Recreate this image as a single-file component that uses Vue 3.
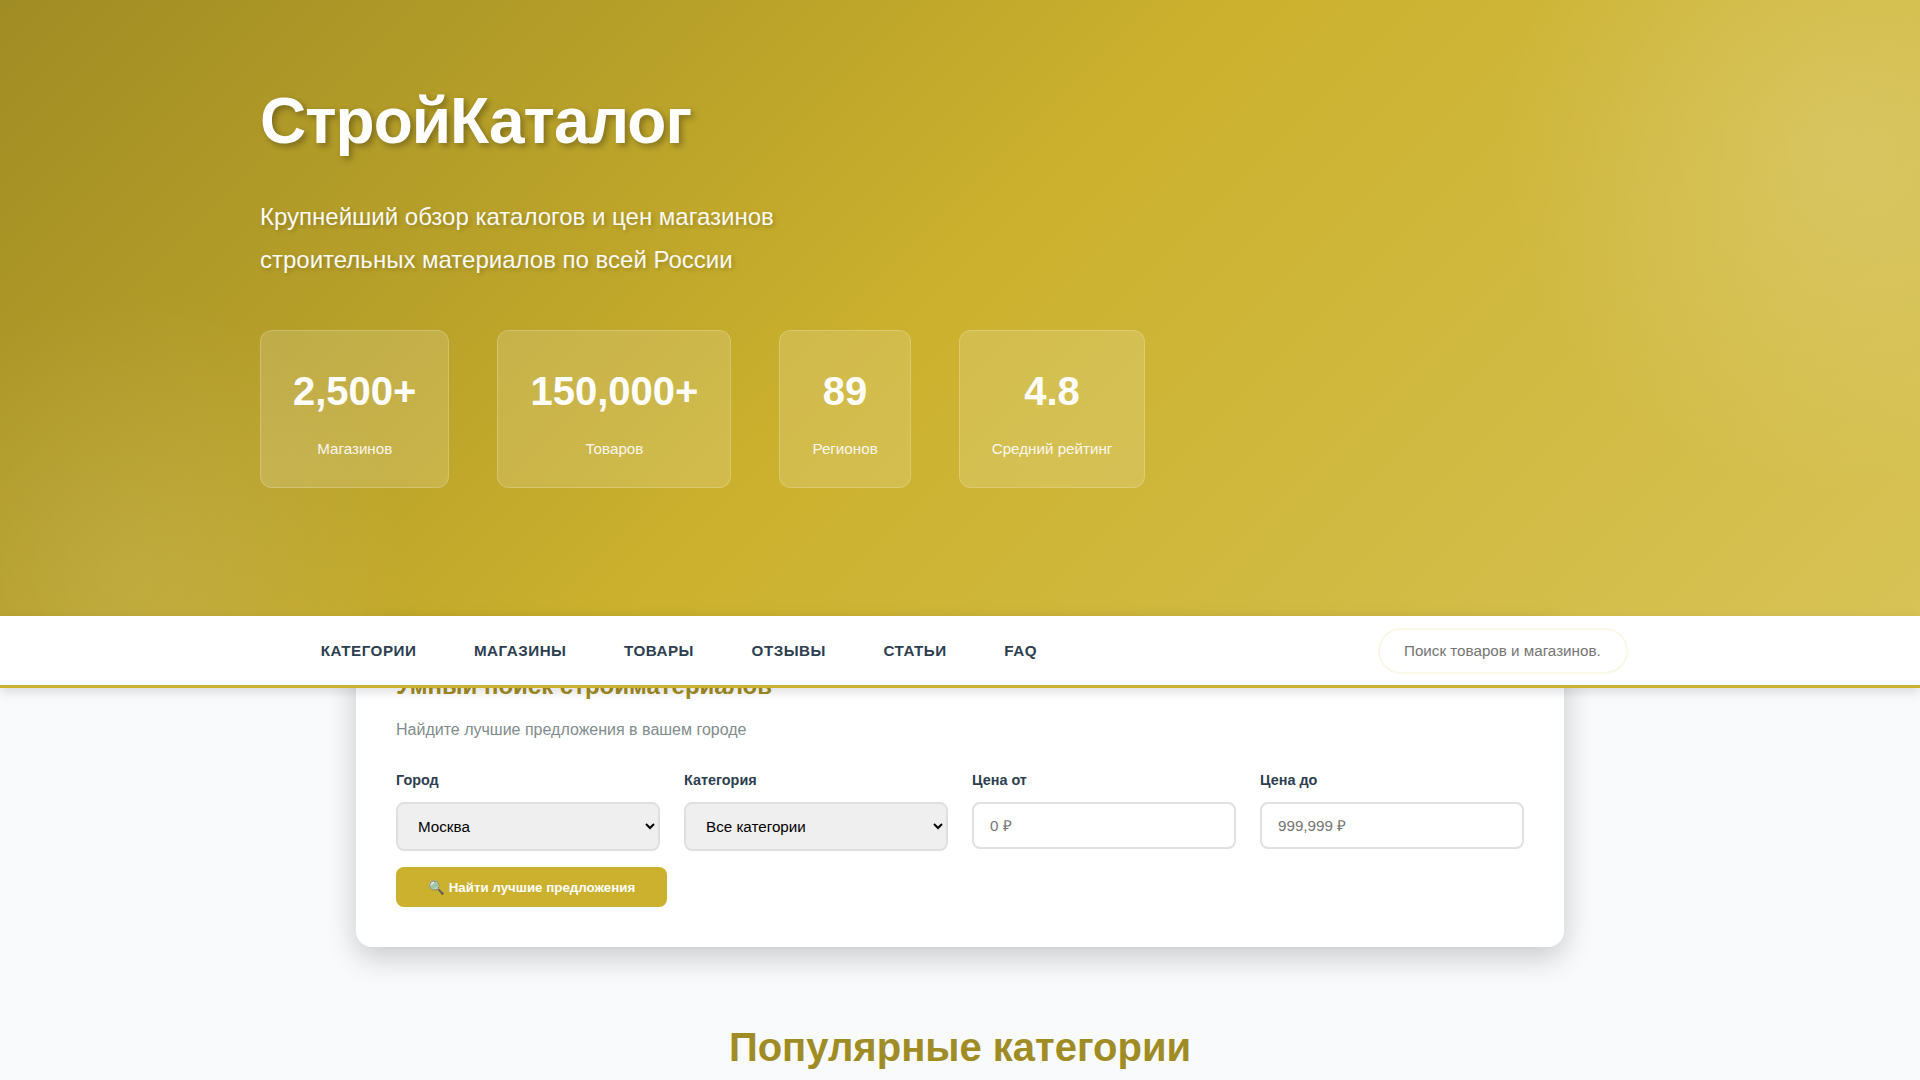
<script setup>
	import { ref } from 'vue';

	const stats = [
		{ value: '2,500+', label: 'Магазинов' },
		{ value: '150,000+', label: 'Товаров' },
		{ value: '89', label: 'Регионов' },
		{ value: '4.8', label: 'Средний рейтинг' },
	];
	const links = ['Категории', 'Магазины', 'Товары', 'Отзывы', 'Статьи', 'FAQ'];
	const cities = ['Москва', 'Санкт-Петербург', 'Казань'];
	const categories = ['Все категории', 'Инструменты', 'Отделка'];

	const query = ref('');
	const city = ref('Москва');
	const category = ref('Все категории');
	const priceFrom = ref('');
	const priceTo = ref('');
</script>

<template>
	<header class="hero">
		<div class="hero-content">
			<h1>СтройКаталог</h1>
			<p class="subtitle">
				Крупнейший обзор каталогов и цен магазинов строительных материалов по
				всей России
			</p>
			<div class="stats">
				<div v-for="stat in stats" :key="stat.label" class="stat">
					<span class="stat-value">{{ stat.value }}</span>
					<span class="stat-label">{{ stat.label }}</span>
				</div>
			</div>
		</div>
	</header>

	<nav class="nav">
		<div class="nav-content">
			<ul class="nav-links">
				<li v-for="link in links" :key="link">
					<a href="#">{{ link }}</a>
				</li>
			</ul>
			<input
				v-model="query"
				class="nav-search"
				type="text"
				placeholder="Поиск товаров и магазинов..."
			/>
		</div>
	</nav>

	<main>
		<!-- search form -->
		<section class="finder">
			<h3>Умный поиск стройматериалов</h3>
			<p class="finder-text">Найдите лучшие предложения в вашем городе</p>
			<div class="fields">
				<div class="field">
					<label for="city">Город</label>
					<select id="city" v-model="city">
						<option v-for="item in cities" :key="item">{{ item }}</option>
					</select>
				</div>
				<div class="field">
					<label for="category">Категория</label>
					<select id="category" v-model="category">
						<option v-for="item in categories" :key="item">{{ item }}</option>
					</select>
				</div>
				<div class="field">
					<label for="from">Цена от</label>
					<input id="from" v-model="priceFrom" type="number" placeholder="0 ₽" />
				</div>
				<div class="field">
					<label for="to">Цена до</label>
					<input id="to" v-model="priceTo" type="number" placeholder="999,999 ₽" />
				</div>
			</div>
			<button class="find">🔍 Найти лучшие предложения</button>
		</section>

		<h2>Популярные категории</h2>
	</main>
</template>

<style>
	body {
		margin: 0;
		height: 1080px;
		overflow: hidden;
		background: #f8fafc;
		color: #2c3e50;
		font-family: 'Liberation Sans', Arial, sans-serif;
		line-height: 1.8;
	}
	* {
		box-sizing: border-box;
	}
</style>

<style scoped>
	h1,
	h2,
	h3,
	p,
	ul {
		margin: 0;
		padding: 0;
	}

	.hero {
		height: 616px;
		padding: 64px 0;
		color: white;
		background:
			radial-gradient(circle at 1843px 146px, rgba(255, 255, 255, 0.15), transparent 350px),
			radial-gradient(circle at 130px 577px, rgba(255, 255, 255, 0.1), transparent 285px),
			linear-gradient(135deg, #a08c24 0%, #cbb12d 49%, #d7c356 100%);
	}
	.hero-content {
		width: 1400px;
		margin: 0 auto;
	}
	h1 {
		margin-bottom: 16px;
		font-size: 64px;
		letter-spacing: -1px;
		text-shadow: 3px 3px 6px rgba(0, 0, 0, 0.3);
	}
	.subtitle {
		max-width: 600px;
		margin-bottom: 48.4px;
		font-size: 24px;
		opacity: 0.95;
		text-shadow: 2px 2px 4px rgba(0, 0, 0, 0.2);
	}
	.stats {
		display: flex;
		gap: 48px;
	}
	.stat {
		padding: 24px 32px 24.6px;
		text-align: center;
		border: 1px solid rgba(255, 255, 255, 0.2);
		border-radius: 12px;
		background: rgba(255, 255, 255, 0.15);
	}
	.stat-value {
		display: block;
		margin-bottom: 8px;
		font-size: 40px;
		font-weight: bold;
	}
	.stat-label {
		display: block;
		font-size: 15.2px;
		opacity: 0.9;
	}

	.nav {
		position: relative;
		z-index: 2;
		background: white;
		border-bottom: 3px solid #cbb12d;
		box-shadow: 0 4px 10px rgba(0, 0, 0, 0.13);
	}
	.nav-content {
		display: flex;
		align-items: center;
		justify-content: space-between;
		width: 1400px;
		height: 69px;
		margin: 0 auto;
		padding: 0 32px;
	}
	.nav-links {
		display: flex;
		list-style: none;
	}
	.nav-links a {
		display: block;
		padding: 20.8px 28.8px;
		color: #2c3e50;
		font-size: 15.2px;
		font-weight: 600;
		letter-spacing: 0.5px;
		text-transform: uppercase;
		text-decoration: none;
	}
	.nav-search {
		width: 250px;
		height: 46px;
		padding: 0 24px;
		border: 2px solid #faf7e6;
		border-radius: 25px;
		font-family: inherit;
		font-size: 15.2px;
	}

	.finder {
		width: 1208px;
		margin: -64px auto 64px;
		padding: 40px;
		border-radius: 16px;
		background: white;
		box-shadow: 0 10px 30px rgba(0, 0, 0, 0.2);
	}
	.finder h3 {
		margin-bottom: 8.6px;
		color: #a08c24;
		font-size: 24px;
	}
	.finder-text {
		margin-bottom: 23.4px;
		color: #7f8c8d;
		font-size: 16px;
	}
	.fields {
		display: grid;
		grid-template-columns: repeat(4, 1fr);
		align-items: start;
		gap: 24px;
		margin-bottom: 16px;
	}
	.field {
		display: flex;
		flex-direction: column;
	}
	.field label {
		margin-bottom: 8px;
		font-size: 14.4px;
		font-weight: 600;
	}
	.field input,
	.field select {
		width: 100%;
		height: 47px;
		padding: 0 16px;
		border: 2px solid #e0e0e0;
		border-radius: 8px;
		font-family: inherit;
		font-size: 15.2px;
	}
	.field select {
		height: 49px;
		background: #efefef;
	}
	.find {
		display: block;
		height: 40px;
		padding: 1px 32px 0;
		border: none;
		border-radius: 8px;
		background: #cbb12d;
		color: white;
		font-family: inherit;
		font-size: 13.333px;
		font-weight: 600;
	}

	h2 {
		color: #a08c24;
		font-size: 40px;
		text-align: center;
	}
</style>
